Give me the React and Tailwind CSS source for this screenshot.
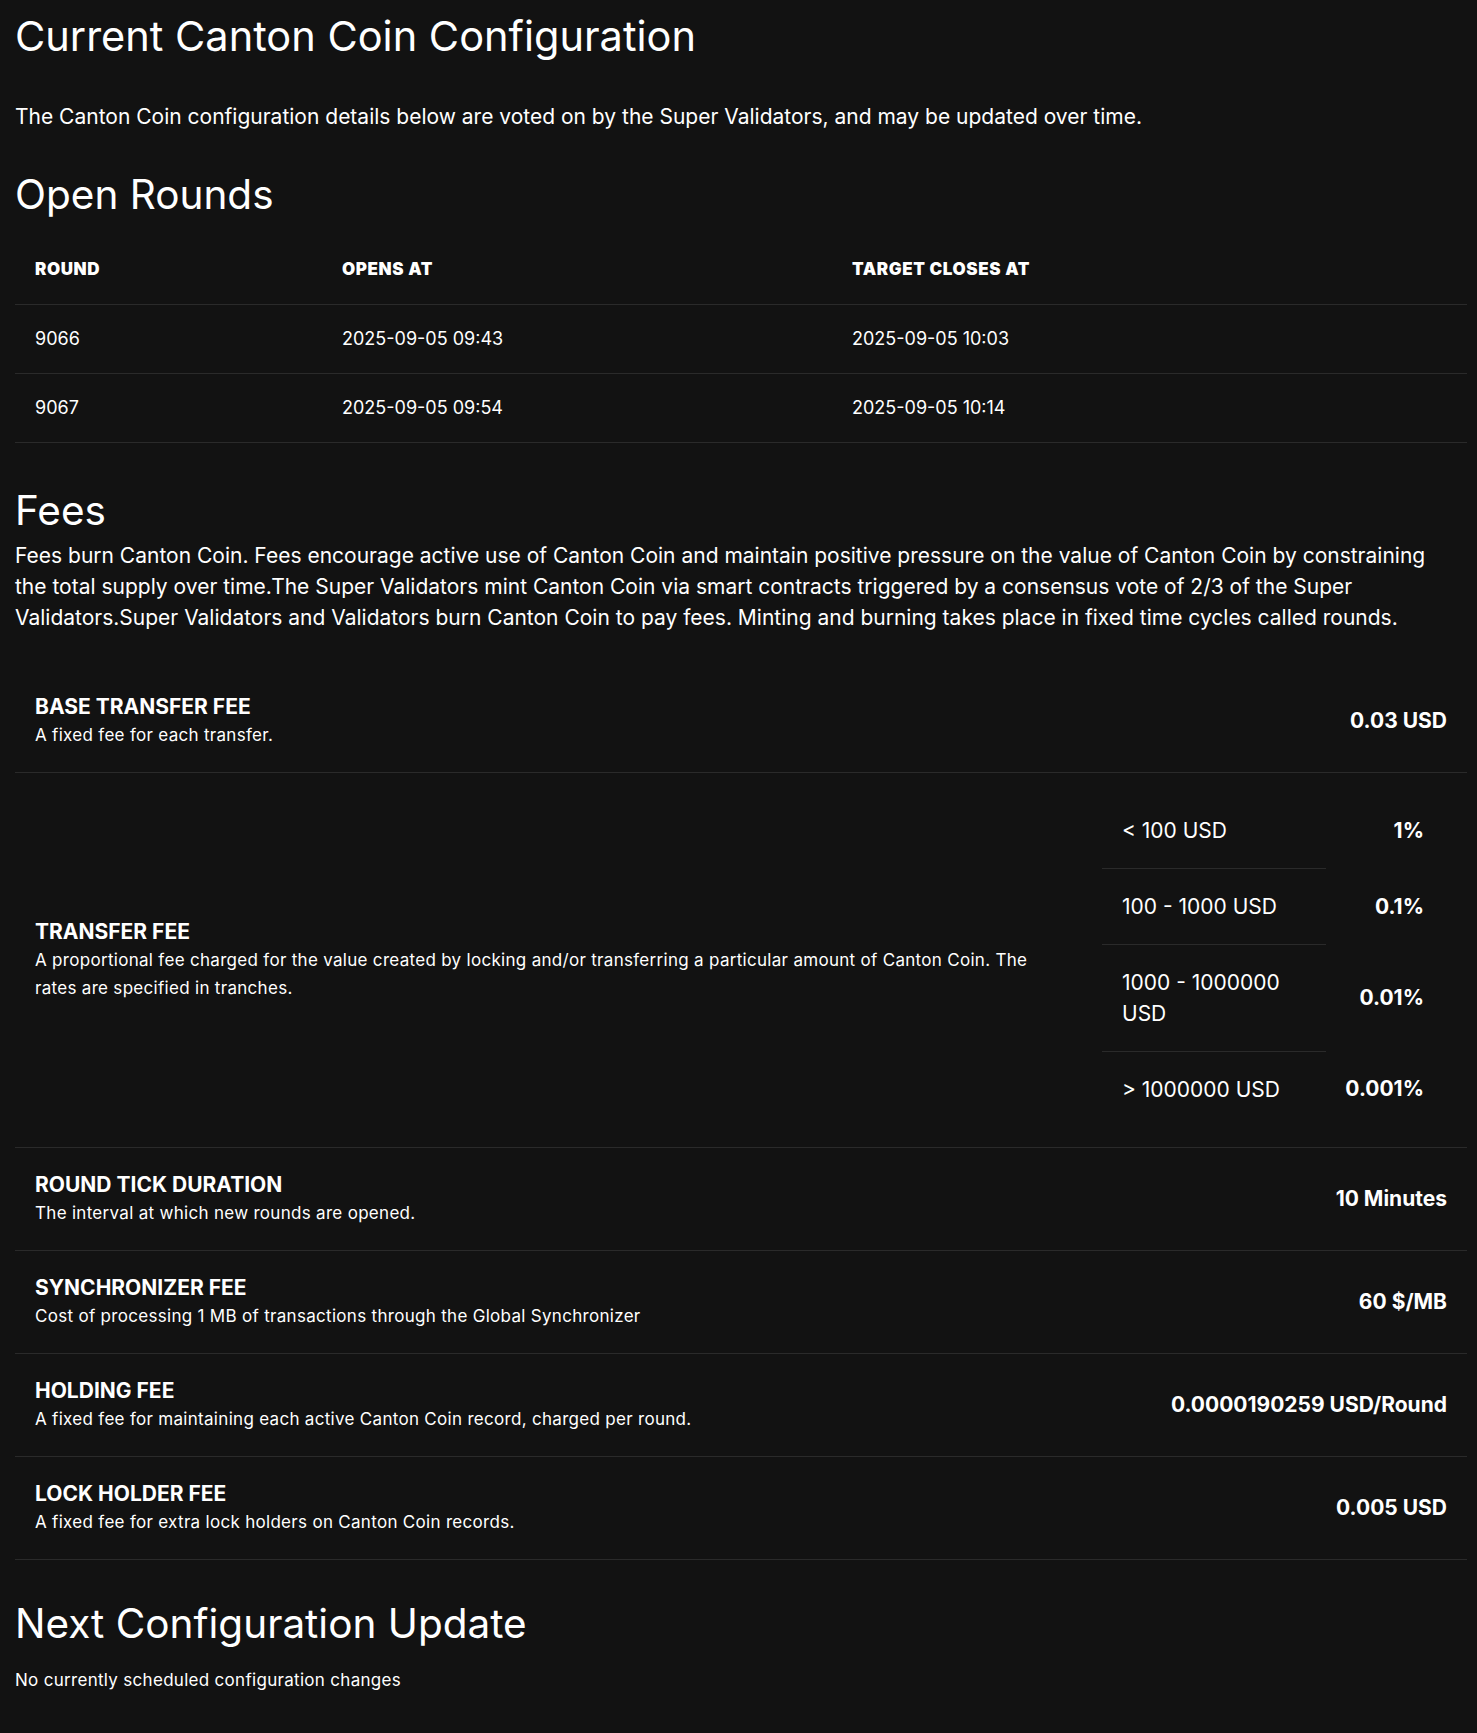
import React from 'react';

const rounds = [
  ['9066', '2025-09-05 09:43', '2025-09-05 10:03'],
  ['9067', '2025-09-05 09:54', '2025-09-05 10:14'],
];

const tranches = [
  ['< 100 USD', '1%'],
  ['100 - 1000 USD', '0.1%'],
  ['1000 - 1000000 USD', '0.01%'],
  ['> 1000000 USD', '0.001%'],
];

const fees = [
  ['ROUND TICK DURATION', 'The interval at which new rounds are opened.', '10 Minutes'],
  ['SYNCHRONIZER FEE', 'Cost of processing 1 MB of transactions through the Global Synchronizer', '60 $/MB'],
  ['HOLDING FEE', 'A fixed fee for maintaining each active Canton Coin record, charged per round.', '0.0000190259 USD/Round'],
  ['LOCK HOLDER FEE', 'A fixed fee for extra lock holders on Canton Coin records.', '0.005 USD'],
];

const FeeLabel = ({ title, desc }) => (
  <div>
    <div className="text-[21px] font-bold leading-7">{title}</div>
    <div className="text-[17px] leading-7 tracking-[0.3px]">{desc}</div>
  </div>
);

export default function App() {
  return (
    <div className="min-h-[1733px] bg-[#121212] text-white pl-[15px] pr-[10px] pb-10" style={{ fontFamily: 'Inter, "Noto Sans", sans-serif' }}>
      <h1 className="text-[41.5px] leading-[48px] pt-[12px]">Current Canton Coin Configuration</h1>
      <p className="text-[21px] mt-[41px]">The Canton Coin configuration details below are voted on by the Super Validators, and may be updated over time.</p>

      <h2 className="text-[40.5px] leading-[52px] mt-[36px]">Open Rounds</h2>
      <div className="mt-[16px]">
        <div className="grid grid-cols-[307px_510px_1fr] h-[68px] items-center pl-[20px] border-b border-[#2a2a2a] text-[17px] font-black tracking-[0.6px]">
          <div>ROUND</div><div>OPENS AT</div><div>TARGET CLOSES AT</div>
        </div>
        {rounds.map((r) => (
          <div key={r[0]} className="grid grid-cols-[307px_510px_1fr] h-[69px] items-center pl-[20px] border-b border-[#2a2a2a] text-[18px]">
            <div>{r[0]}</div><div>{r[1]}</div><div>{r[2]}</div>
          </div>
        ))}
      </div>

      <h2 className="text-[40.5px] leading-[52px] mt-[42px]">Fees</h2>
      <p className="text-[21px] leading-[31px] mt-[3px] pr-[10px]">Fees burn Canton Coin. Fees encourage active use of Canton Coin and maintain positive pressure on the value of Canton Coin by constraining the total supply over time.The Super Validators mint Canton Coin via smart contracts triggered by a consensus vote of 2/3 of the Super Validators.Super Validators and Validators burn Canton Coin to pay fees. Minting and burning takes place in fixed time cycles called rounds.</p>

      <div className="mt-[37px]">
        <div className="flex items-center justify-between h-[103px] px-[20px] border-b border-[#2a2a2a]">
          <FeeLabel title="BASE TRANSFER FEE" desc="A fixed fee for each transfer." />
          <div className="text-[21px] font-bold">0.03 USD</div>
        </div>
        <div className="flex items-center justify-between pl-[20px] pr-[43px] border-b border-[#2a2a2a] py-[20px]">
          <div className="w-[1050px] pr-[40px]">
            <FeeLabel title="TRANSFER FEE" desc="A proportional fee charged for the value created by locking and/or transferring a particular amount of Canton Coin. The rates are specified in tranches." />
          </div>
          <div className="w-[322px]">
            {tranches.map(([a, b], i) => (
              <div key={a} className="grid grid-cols-[224px_1fr] items-center">
                <div className={`px-[20px] py-[22px] text-[21px] leading-[31px] ${i < 3 ? 'border-b border-[#2a2a2a]' : ''}`}>{a}</div>
                <div className="text-right text-[21px] font-bold">{b}</div>
              </div>
            ))}
          </div>
        </div>
        {fees.map(([t, d, v]) => (
          <div key={t} className="flex items-center justify-between h-[103px] px-[20px] border-b border-[#2a2a2a]">
            <FeeLabel title={t} desc={d} />
            <div className="text-[21px] font-bold">{v}</div>
          </div>
        ))}
      </div>

      <h2 className="text-[40.5px] leading-[52px] mt-[38px]">Next Configuration Update</h2>
      <p className="text-[17px] mt-[18px] tracking-[0.3px]">No currently scheduled configuration changes</p>
    </div>
  );
}
